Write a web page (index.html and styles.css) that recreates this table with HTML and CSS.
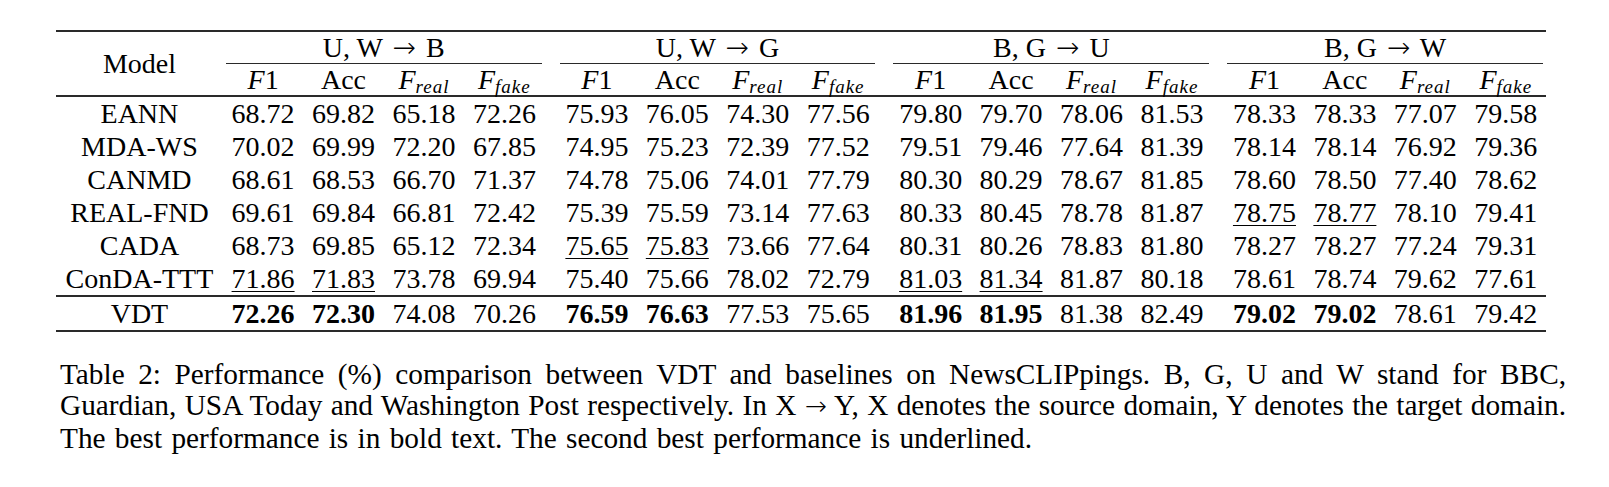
FILE: index.html
```html
<!doctype html>
<html>
<head>
    <meta charset="utf-8">
    <title>Table 2</title>
    <link rel="stylesheet" href="styles.css">
</head>
<body>
	<div class='page'>
		<table class='results'>
			<colgroup>
				<col class='c-model'>
				<col class='c-num'><col class='c-num'><col class='c-num'><col class='c-num'>
				<col class='c-gap'>
				<col class='c-num'><col class='c-num'><col class='c-num'><col class='c-num'>
				<col class='c-gap'>
				<col class='c-num'><col class='c-num'><col class='c-num'><col class='c-num'>
				<col class='c-gap'>
				<col class='c-num'><col class='c-num'><col class='c-num'><col class='c-num'>
			</colgroup>
			<thead>
				<tr class='top'>
					<th rowspan='2' class='model'>Model</th>
					<th colspan='4' class='grp'><div>U, W <span class='arr'>&rarr;</span> B</div></th>
					<th></th>
					<th colspan='4' class='grp'><div>U, W <span class='arr'>&rarr;</span> G</div></th>
					<th></th>
					<th colspan='4' class='grp'><div>B, G <span class='arr'>&rarr;</span> U</div></th>
					<th></th>
					<th colspan='4' class='grp'><div>B, G <span class='arr'>&rarr;</span> W</div></th>
				</tr>
				<tr class='sub'>
					<th><i>F</i>1</th><th>Acc</th><th><i>F</i><sub>real</sub></th><th><i>F</i><sub>fake</sub></th>
					<th></th>
					<th><i>F</i>1</th><th>Acc</th><th><i>F</i><sub>real</sub></th><th><i>F</i><sub>fake</sub></th>
					<th></th>
					<th><i>F</i>1</th><th>Acc</th><th><i>F</i><sub>real</sub></th><th><i>F</i><sub>fake</sub></th>
					<th></th>
					<th><i>F</i>1</th><th>Acc</th><th><i>F</i><sub>real</sub></th><th><i>F</i><sub>fake</sub></th>
				</tr>
			</thead>
			<tbody>
				<tr>
					<td>EANN</td>
					<td>68.72</td><td>69.82</td><td>65.18</td><td>72.26</td><td></td>
					<td>75.93</td><td>76.05</td><td>74.30</td><td>77.56</td><td></td>
					<td>79.80</td><td>79.70</td><td>78.06</td><td>81.53</td><td></td>
					<td>78.33</td><td>78.33</td><td>77.07</td><td>79.58</td>
				</tr>
				<tr>
					<td>MDA-WS</td>
					<td>70.02</td><td>69.99</td><td>72.20</td><td>67.85</td><td></td>
					<td>74.95</td><td>75.23</td><td>72.39</td><td>77.52</td><td></td>
					<td>79.51</td><td>79.46</td><td>77.64</td><td>81.39</td><td></td>
					<td>78.14</td><td>78.14</td><td>76.92</td><td>79.36</td>
				</tr>
				<tr>
					<td>CANMD</td>
					<td>68.61</td><td>68.53</td><td>66.70</td><td>71.37</td><td></td>
					<td>74.78</td><td>75.06</td><td>74.01</td><td>77.79</td><td></td>
					<td>80.30</td><td>80.29</td><td>78.67</td><td>81.85</td><td></td>
					<td>78.60</td><td>78.50</td><td>77.40</td><td>78.62</td>
				</tr>
				<tr>
					<td>REAL-FND</td>
					<td>69.61</td><td>69.84</td><td>66.81</td><td>72.42</td><td></td>
					<td>75.39</td><td>75.59</td><td>73.14</td><td>77.63</td><td></td>
					<td>80.33</td><td>80.45</td><td>78.78</td><td>81.87</td><td></td>
					<td><u>78.75</u></td><td><u>78.77</u></td><td>78.10</td><td>79.41</td>
				</tr>
				<tr>
					<td>CADA</td>
					<td>68.73</td><td>69.85</td><td>65.12</td><td>72.34</td><td></td>
					<td><u>75.65</u></td><td><u>75.83</u></td><td>73.66</td><td>77.64</td><td></td>
					<td>80.31</td><td>80.26</td><td>78.83</td><td>81.80</td><td></td>
					<td>78.27</td><td>78.27</td><td>77.24</td><td>79.31</td>
				</tr>
				<tr>
					<td>ConDA-TTT</td>
					<td><u>71.86</u></td><td><u>71.83</u></td><td>73.78</td><td>69.94</td><td></td>
					<td>75.40</td><td>75.66</td><td>78.02</td><td>72.79</td><td></td>
					<td><u>81.03</u></td><td><u>81.34</u></td><td>81.87</td><td>80.18</td><td></td>
					<td>78.61</td><td>78.74</td><td>79.62</td><td>77.61</td>
				</tr>
				<tr class='ours'>
					<td>VDT</td>
					<td><b>72.26</b></td><td><b>72.30</b></td><td>74.08</td><td>70.26</td><td></td>
					<td><b>76.59</b></td><td><b>76.63</b></td><td>77.53</td><td>75.65</td><td></td>
					<td><b>81.96</b></td><td><b>81.95</b></td><td>81.38</td><td>82.49</td><td></td>
					<td><b>79.02</b></td><td><b>79.02</b></td><td>78.61</td><td>79.42</td>
				</tr>
			</tbody>
		</table>

		<p class='caption'>
			<span class='line just'>Table 2: Performance (%) comparison between VDT and baselines on NewsCLIPpings. B, G, U and W stand for BBC,</span>
			<span class='line just tight'>Guardian, USA Today and Washington Post respectively. In X <span class='arr'>&rarr;</span> Y, X denotes the source domain, Y denotes the target domain.</span>
			<span class='line last'>The best performance is in bold text. The second best performance is underlined.</span>
		</p>
	</div>
</body>
</html>
```

FILE: styles.css
```css
*{margin: 0;padding: 0;}
body{background: #fff;color: #000;font-family: "Liberation Serif", "Times New Roman", serif;}
.page{padding: 30px 0 0 56px;width: 1512px;}

.arr{font-family: "DejaVu Sans", sans-serif;font-size: 1em;font-weight: 200;margin: 0 3px;}

.results{border-collapse: collapse;table-layout: fixed;width: 1490px;font-size: 28px;}
.results .c-model{width: 166px;}
.results .c-num{width: 80px;}
.results .c-gap{width: 12px;}
.results th, .results td{font-weight: normal;text-align: center;white-space: nowrap;padding: 0;}

.results tr.top th{border-top: 2px solid #2a2a2a;height: 32px;line-height: 32px;}
.results th.model{vertical-align: middle;border-bottom: 2px solid #2a2a2a;}
.results th.grp div{margin: 0 3px;border-bottom: 1px solid #2a2a2a;line-height: 30px;}
.results tr.sub th{border-bottom: 2px solid #2a2a2a;height: 31px;line-height: 30px;}
.results i{font-style: italic;}
.results sub{font-size: 19px;font-style: italic;vertical-align: -4px;line-height: 0;letter-spacing: 1px;}

.results td{height: 33px;line-height: 33px;}
.results tr.ours td{border-top: 2px solid #2a2a2a;border-bottom: 2px solid #2a2a2a;height: 33px;}
.results b{font-weight: bold;}
.results u{text-decoration-thickness: 1px;text-underline-offset: 3px;}

.caption{margin: 27px 0 0 4px;width: 1506px;font-size: 29.3px;line-height: 31.3px;}
.caption .line{display: block;white-space: nowrap;}
.caption .just{text-align: justify;text-align-last: justify;}
.caption .tight{word-spacing: -1px;}
.caption .last{word-spacing: 2px;}
.caption .arr{font-size: 0.9em;margin: 0;}
```
